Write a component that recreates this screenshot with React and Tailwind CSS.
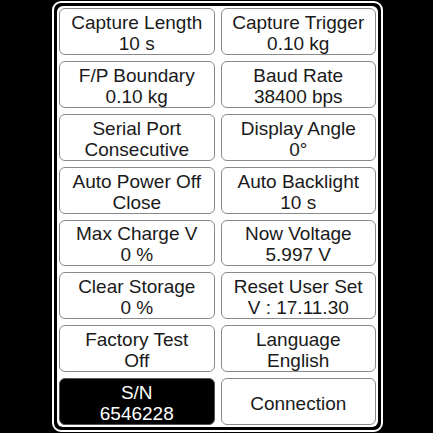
import React from "react";

const items = [
  ["Capture Length", "10 s"],
  ["Capture Trigger", "0.10 kg"],
  ["F/P Boundary", "0.10 kg"],
  ["Baud Rate", "38400 bps"],
  ["Serial Port", "Consecutive"],
  ["Display Angle", "0°"],
  ["Auto Power Off", "Close"],
  ["Auto Backlight", "10 s"],
  ["Max Charge V", "0 %"],
  ["Now Voltage", "5.997 V"],
  ["Clear Storage", "0 %"],
  ["Reset User Set", "V : 17.11.30"],
  ["Factory Test", "Off"],
  ["Language", "English"],
  ["S/N", "6546228", true],
  ["Connection"],
];

export default function App() {
  return (
    <div
      className="w-[433px] h-[433px] bg-black overflow-hidden pt-[1px] pl-[52px]"
      style={{ fontFamily: '"Liberation Sans", Arial, sans-serif' }}
    >
      <div className="w-[331px] h-[431px] border-2 border-white rounded-[9px] bg-black p-[3px]">
        <div className="w-full h-full bg-white rounded-[6px] p-[2px] grid grid-cols-2 grid-rows-8 gap-[6px]">
          {items.map(([a, b, dark], i) => (
            <div
              key={i}
              className={
                "flex flex-col items-center justify-center rounded-[6px] border pt-[3px] text-[19px] leading-[21px] " +
                (dark
                  ? "bg-black text-white border-[#555]"
                  : "bg-white text-[#1a1a1a] border-[#8a8a8a]")
              }
            >
              <div>{a}</div>
              {b && <div>{b}</div>}
            </div>
          ))}
        </div>
      </div>
    </div>
  );
}
